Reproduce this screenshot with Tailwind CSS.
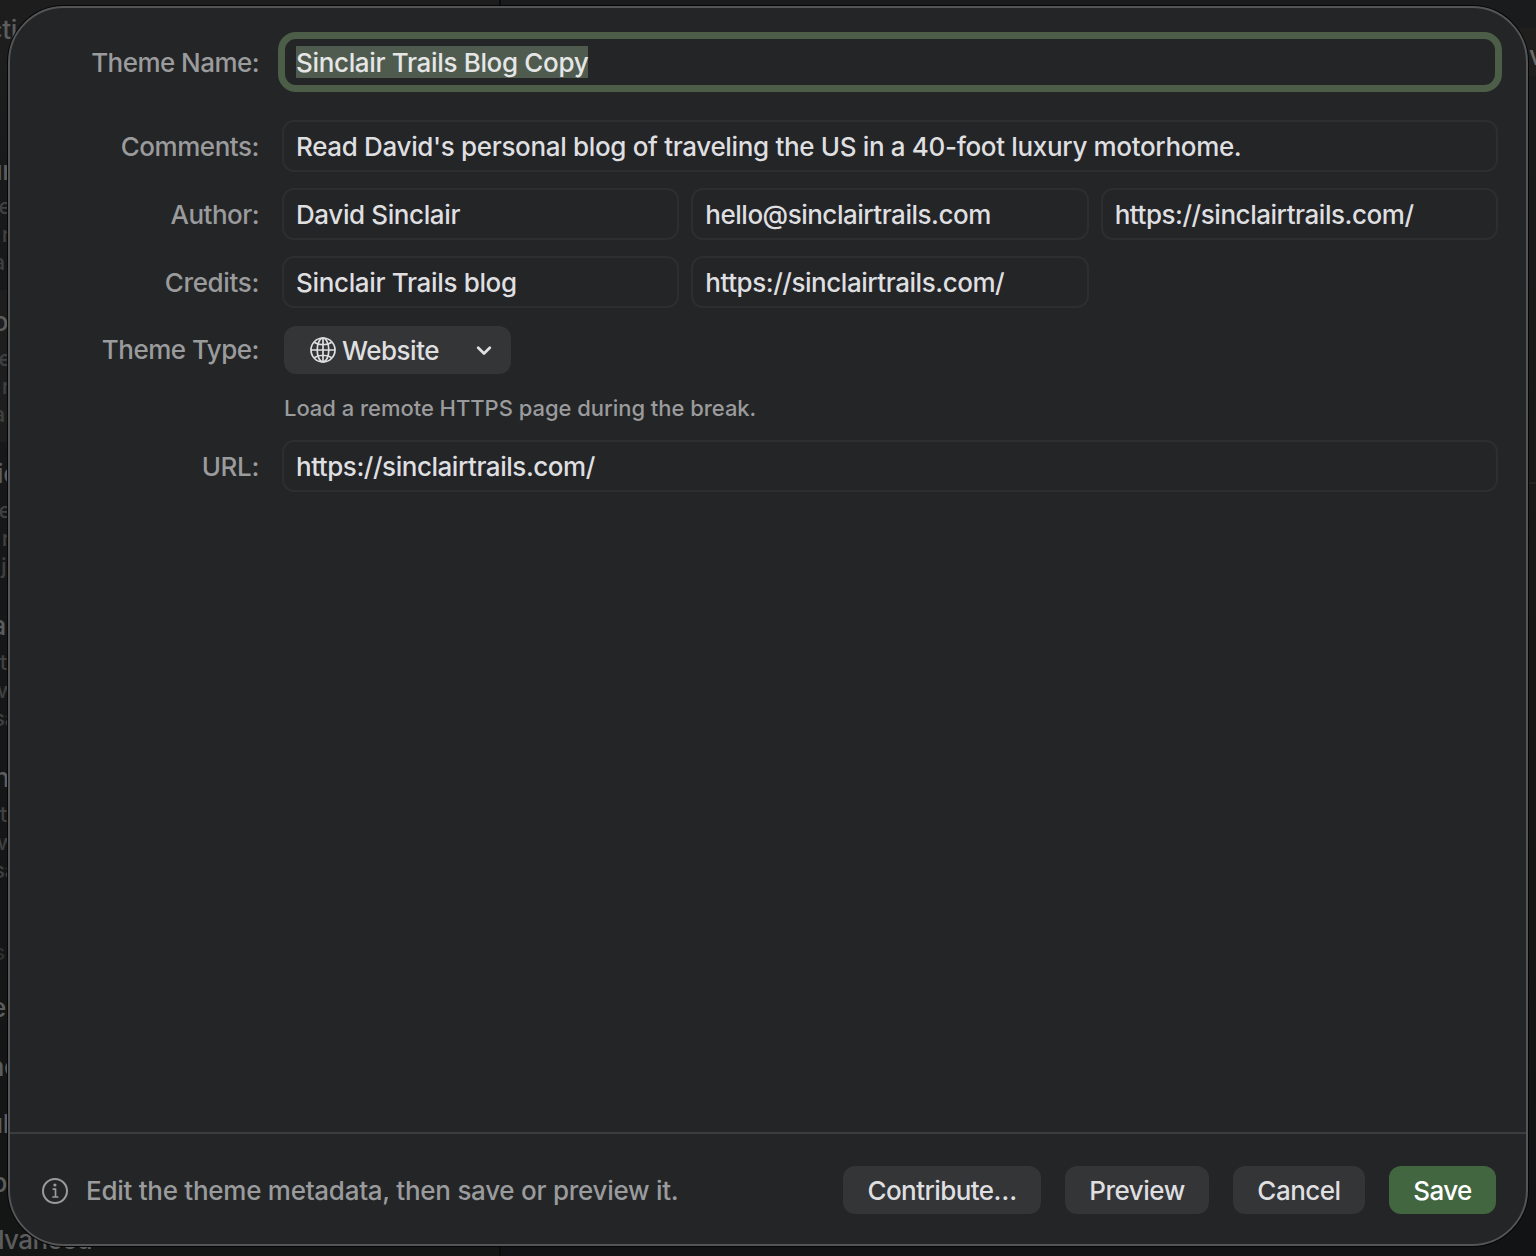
<!DOCTYPE html>
<html lang="en">
<head>
<meta charset="utf-8">
<title>Theme Editor</title>
<script src="https://cdn.jsdelivr.net/npm/@tailwindcss/browser@4"></script>
</head>
<body class="h-[1256px] w-[1536px] overflow-hidden bg-[#1a1b1b] font-['Inter',sans-serif] text-[26px] leading-8 font-[450] tracking-[-0.34px] text-[#dfdfe0] antialiased">
<div class="relative h-[1256px] w-[1536px] overflow-hidden">
  <!-- Dimmed window behind the sheet -->
  <div class="absolute inset-0 flex">
    <div class="relative w-[501px] border-r-2 border-[#0c0c0c] bg-linear-to-b from-[#1d1d1d] from-5% via-[#17191a] via-15% to-[#141515] text-[#5c5d5e]">
      <div class="absolute left-0 top-[290px] h-[152px] w-full bg-[#1e1e1e]"></div>
      <span class="absolute right-[482px] top-[14px]">Acti</span>
      <span class="absolute right-[487px] top-[155px] font-medium">Fur</span>
      <span class="absolute right-[488px] top-[190px] text-[22px] text-[#3f4041]">The</span>
      <span class="absolute right-[489px] top-[218px] text-[22px] text-[#3f4041]">r</span>
      <span class="absolute right-[494px] top-[246px] text-[22px] text-[#3f4041]">a</span>
      <span class="absolute right-[491px] top-[306px] font-medium">Po</span>
      <span class="absolute right-[488px] top-[342px] text-[22px] text-[#3f4041]">The</span>
      <span class="absolute right-[489px] top-[370px] text-[22px] text-[#3f4041]">r</span>
      <span class="absolute right-[494px] top-[398px] text-[22px] text-[#3f4041]">a</span>
      <span class="absolute right-[481px] top-[458px] font-medium">Mic</span>
      <span class="absolute right-[488px] top-[494px] text-[22px] text-[#3f4041]">The</span>
      <span class="absolute right-[489px] top-[522px] text-[22px] text-[#3f4041]">r</span>
      <span class="absolute right-[480px] top-[550px] text-[22px] text-[#3f4041]">ju</span>
      <span class="absolute right-[493px] top-[610px] font-medium">a</span>
      <span class="absolute right-[492px] top-[646px] text-[22px] text-[#3f4041]">t</span>
      <span class="absolute right-[484px] top-[674px] text-[22px] text-[#3f4041]">w</span>
      <span class="absolute right-[482px] top-[702px] text-[22px] text-[#3f4041]">sa</span>
      <span class="absolute right-[490px] top-[762px] font-medium">n</span>
      <span class="absolute right-[492px] top-[798px] text-[22px] text-[#3f4041]">t</span>
      <span class="absolute right-[484px] top-[826px] text-[22px] text-[#3f4041]">w</span>
      <span class="absolute right-[482px] top-[854px] text-[22px] text-[#3f4041]">sa</span>
      <span class="absolute right-[494px] top-[936px] text-[22px] text-[#303132]">s</span>
      <span class="absolute right-[493px] top-[992px] font-medium">e</span>
      <span class="absolute right-[480px] top-[1051px]">ne</span>
      <span class="absolute right-[490px] top-[1108px]">ul</span>
      <span class="absolute right-[492px] top-[1167px]">p</span>
      <span class="absolute right-[407px] top-[1224px] tracking-[-0.6px]">Advanced</span>
    </div>
    <div class="relative flex-1 bg-linear-to-b from-[#1a1b1c] via-[#181715] to-[#121314]">
      <div class="absolute left-0 top-7 h-12 w-full bg-[#1f1e1d]"></div>
      <div class="absolute left-0 top-[482px] h-0.5 w-full bg-[#232221]"></div>
      <span class="absolute left-[1028px] top-[40px] text-[#6a6a6a]">v</span>
    </div>
  </div>

  <!-- Sheet -->
  <main class="absolute left-2 top-1.5 flex h-[1240px] w-[1520px] flex-col rounded-[56px] border-2 border-[#545556] bg-[#242527] shadow-[0_0_0_1px_#050505]">
    <form class="grid grid-cols-[249px_1216px] gap-x-[23px] pt-6">
      <label class="flex h-[60px] items-center justify-end pt-0.5 text-[#9a9b9c]"><span class="tracking-[-0.55px]">Theme Name:</span></label>
      <div class="-mx-1 flex h-[60px] items-center rounded-[18px] border-7 border-[#4c5e48] pl-[11px]"><span class="bg-[#4f5b4f] pt-px leading-[31px] text-[#e6e6e6]">Sinclair Trails Blog Copy</span></div>

      <label class="mt-7 flex h-13 items-center justify-end pt-0.5 text-[#9a9b9c]"><span class="tracking-[-0.45px]">Comments:</span></label>
      <div class="mt-7 flex h-13 items-center rounded-xl border-2 border-[#2d2e30] pt-0.5 pl-3"><span>Read David's personal blog of traveling the US in a 40-foot luxury motorhome.</span></div>

      <label class="mt-4 flex h-13 items-center justify-end pt-0.5 text-[#9a9b9c]"><span class="tracking-[-0.55px]">Author:</span></label>
      <div class="mt-4 grid grid-cols-3 gap-3">
        <div class="flex h-13 items-center rounded-xl border-2 border-[#2d2e30] pt-0.5 pl-3"><span class="tracking-[-0.39px]">David Sinclair</span></div>
        <div class="flex h-13 items-center rounded-xl border-2 border-[#2d2e30] pt-0.5 pl-3"><span class="tracking-[-0.49px]">hello@sinclairtrails.com</span></div>
        <div class="flex h-13 items-center rounded-xl border-2 border-[#2d2e30] pt-0.5 pl-3"><span class="tracking-[-0.46px]">https://sinclairtrails.com/</span></div>
      </div>

      <label class="mt-4 flex h-13 items-center justify-end pt-0.5 text-[#9a9b9c]"><span>Credits:</span></label>
      <div class="mt-4 grid grid-cols-3 gap-3">
        <div class="flex h-13 items-center rounded-xl border-2 border-[#2d2e30] pt-0.5 pl-3"><span>Sinclair Trails blog</span></div>
        <div class="flex h-13 items-center rounded-xl border-2 border-[#2d2e30] pt-0.5 pl-3"><span class="tracking-[-0.46px]">https://sinclairtrails.com/</span></div>
      </div>

      <label class="mt-[18px] flex h-12 items-center justify-end text-[#9a9b9c]"><span class="tracking-[-0.5px]">Theme Type:</span></label>
      <div class="mt-[18px] ml-0.5 flex h-12 w-[227px] items-center rounded-xl bg-[#343537] pl-[26px]">
        <svg class="size-[26px]" viewBox="0 0 26 26" fill="none" stroke="#dfdfe0" stroke-width="1.7"><circle cx="13" cy="13" r="12"/><ellipse cx="13" cy="13" rx="5.8" ry="12"/><path d="M13 1v24M1 13h24M4.2 5.2C9 8.6 17 8.6 21.8 5.2M4.2 20.8C9 17.4 17 17.4 21.8 20.8"/></svg>
        <span class="ml-1.5 pt-0.5 tracking-[-0.5px]">Website</span>
        <svg class="ml-auto mr-[19px] h-4 w-4" viewBox="0 0 16 16" fill="none" stroke="#dfdfe0" stroke-width="2.8" stroke-linecap="round" stroke-linejoin="round"><path d="M2.2 5.8 8 11.4 13.8 5.8"/></svg>
      </div>

      <p class="col-start-2 mt-[18px] ml-0.5 text-[22px] tracking-[-0.04px] text-[#9a9b9c]">Load a remote HTTPS page during the break.</p>

      <label class="mt-4 flex h-13 items-center justify-end pt-0.5 text-[#9a9b9c]"><span>URL:</span></label>
      <div class="mt-4 flex h-13 items-center rounded-xl border-2 border-[#2d2e30] pt-0.5 pl-3"><span class="tracking-[-0.46px]">https://sinclairtrails.com/</span></div>
    </form>

    <footer class="mt-auto flex h-[112px] items-center gap-6 border-t-2 border-[#3b3c3e] pl-8 pr-[30px] pt-0.5">
      <svg class="mt-0.5 size-[26px]" viewBox="0 0 26 26" fill="none" stroke="#9a9b9c" stroke-width="2"><circle cx="13" cy="13" r="12"/><path d="M10.6 11.2h2.9v7.6M10.2 19h6.2" stroke-width="1.7"/><circle cx="12.9" cy="7" r="1.6" fill="#9a9b9c" stroke="none"/></svg>
      <p class="-ml-1.5 mr-auto pt-0.5 tracking-[-0.27px] text-[#9a9b9c]">Edit the theme metadata, then save or preview it.</p>
      <button class="h-12 w-[198px] rounded-xl bg-[#343537] pt-0.5 tracking-[-0.58px]">Contribute…</button>
      <button class="h-12 w-36 rounded-xl bg-[#343537] pt-0.5 tracking-[-0.5px]">Preview</button>
      <button class="h-12 w-33 rounded-xl bg-[#343537] pt-0.5 tracking-[-0.5px]">Cancel</button>
      <button class="h-12 w-[107px] rounded-xl bg-[#42663f] pt-0.5 tracking-[-0.6px] text-white">Save</button>
    </footer>
  </main>
</div>
</body>
</html>
